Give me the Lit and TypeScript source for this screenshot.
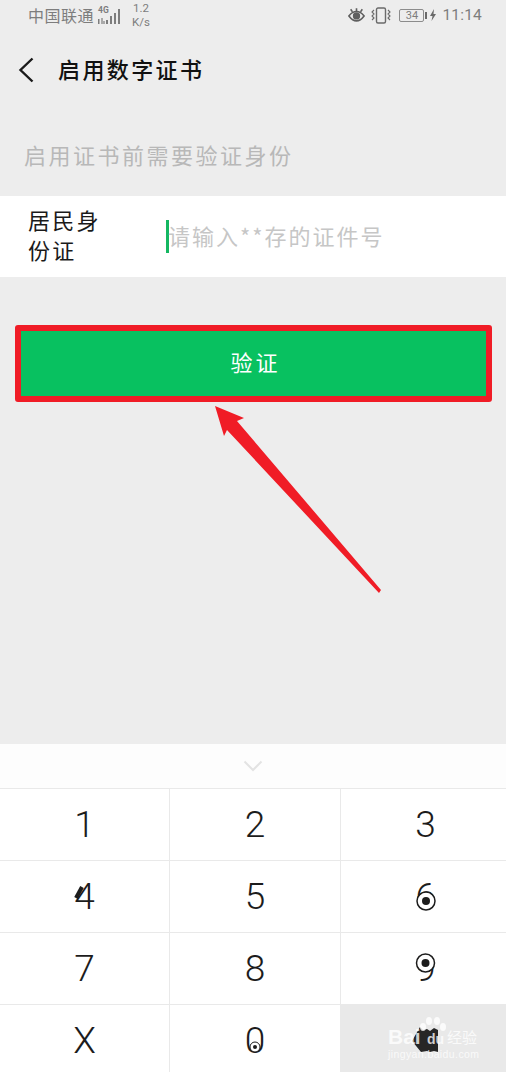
import { html, css, LitElement } from 'lit';
import { customElement } from 'lit/decorators.js';

const KEYS = ['1', '2', '3', '4', '5', '6', '7', '8', '9', 'X', '0'];

@customElement('app-root')
export class AppRoot extends LitElement {
  static styles = css`
    :host {
      display: flex;
      flex-direction: column;
      position: relative;
      width: 506px;
      height: 1072px;
      overflow: hidden;
      background: #ededed;
      font-family: 'Noto Sans CJK SC', 'Noto Sans', sans-serif;
      color: #111;
    }

    .status {
      display: flex;
      align-items: center;
      height: 32px;
      padding: 0 24px 2px 28px;
      box-sizing: border-box;
      color: #7d7d7d;
    }

    .carrier {
      font-size: 16px;
      line-height: 30px;
      letter-spacing: 0.5px;
    }

    .signal {
      margin-left: 2px;
    }

    .speed {
      margin-left: 8px;
      font-family: 'Roboto', sans-serif;
      font-size: 11.5px;
      line-height: 14px;
      text-align: center;
    }

    .status-right {
      display: flex;
      align-items: center;
      margin-left: auto;
    }

    .clock {
      margin-left: 4px;
      font-family: 'Roboto', sans-serif;
      font-size: 15.5px;
      letter-spacing: 0.2px;
    }

    .battery {
      display: flex;
      align-items: center;
      justify-content: center;
      box-sizing: border-box;
      width: 25px;
      height: 13px;
      margin-left: 8px;
      border: 1px solid #8c8c8c;
      border-radius: 2px;
      font-family: 'Roboto', sans-serif;
      font-size: 11px;
      line-height: 1;
    }

    .header {
      display: flex;
      align-items: center;
      height: 76px;
      padding-left: 18px;
    }

    .title {
      margin-left: 24px;
      padding-bottom: 4px;
      font-size: 22px;
      font-weight: 500;
      letter-spacing: 2.4px;
    }

    .hint {
      height: 88px;
      padding: 29px 0 0 24px;
      box-sizing: border-box;
      font-size: 22px;
      line-height: 34px;
      letter-spacing: 2.5px;
      color: #b8b8b8;
    }

    .field {
      display: flex;
      align-items: center;
      height: 81px;
      padding-left: 28px;
      background: #fff;
    }

    .label {
      width: 74px;
      padding-bottom: 5px;
      font-size: 22px;
      line-height: 30px;
      letter-spacing: 2.2px;
      color: #1a1a1a;
    }

    .cursor {
      width: 3px;
      height: 33px;
      margin-left: 64px;
      margin-right: -1px;
      background: #14b761;
    }

    .placeholder {
      padding-bottom: 4px;
      font-size: 22px;
      letter-spacing: 2px;
      color: #c6c6c6;
      white-space: nowrap;
    }

    .submit {
      display: flex;
      align-items: center;
      justify-content: center;
      box-sizing: border-box;
      height: 77px;
      margin: 48px 14px 0 15px;
      padding: 0 0 6px 4px;
      border: 6px solid #f01c26;
      border-radius: 3px;
      background: #08c160;
      color: #fff;
      font-size: 22px;
      letter-spacing: 3px;
    }

    .keyboard {
      margin-top: auto;
      background: #fff;
    }

    .collapse {
      display: flex;
      align-items: center;
      justify-content: center;
      height: 44px;
      padding-right: 1px;
      box-sizing: border-box;
      background: #fdfdfd;
    }

    .keys {
      display: grid;
      grid-template-columns: 169px 171px 166px;
      grid-template-rows: 72px 72px 72px 68px;
    }

    .key {
      display: flex;
      align-items: center;
      justify-content: center;
      box-sizing: border-box;
      border-top: 1px solid #e9e9e9;
      border-left: 1px solid #e9e9e9;
      font-family: 'Roboto', sans-serif;
      font-size: 37px;
      font-weight: 300;
      color: #1c1c1c;
    }

    .key:nth-child(3n + 1) {
      border-left: 0;
    }

    .key:nth-child(3n) {
      padding-left: 4px;
    }

    .key:nth-child(n + 10) {
      padding-top: 3px;
    }

    .key.delete {
      border-left: 0;
      padding-top: 0;
      background: #e9e9e9;
    }

    .overlay {
      position: absolute;
      left: 0;
      top: 0;
      pointer-events: none;
    }

    .watermark {
      position: absolute;
      left: 388px;
      top: 1016px;
      width: 92px;
      height: 44px;
      color: rgba(255, 255, 255, 0.78);
      pointer-events: none;
    }

    .wm-brand {
      position: absolute;
      left: 0;
      top: 9px;
      font-family: 'Liberation Sans', sans-serif;
      font-size: 21px;
      font-weight: 700;
      line-height: 24px;
      white-space: nowrap;
    }

    .wm-du {
      position: absolute;
      left: 39px;
      top: 15px;
      font-family: 'Liberation Sans', sans-serif;
      font-size: 14px;
      font-weight: 700;
      line-height: 16px;
    }

    .wm-cn {
      position: absolute;
      left: 59px;
      top: 10px;
      font-size: 15px;
      line-height: 22px;
      white-space: nowrap;
    }

    .wm-url {
      position: absolute;
      left: 0;
      top: 32px;
      font-family: 'Liberation Sans', sans-serif;
      font-size: 10.5px;
      line-height: 13px;
      letter-spacing: 0.4px;
      white-space: nowrap;
    }

    .wm-paw {
      position: absolute;
      left: 31px;
      top: 0;
    }
  `;

  render() {
    return html`
      <div class="status">
        <span class="carrier">中国联通</span>
        <svg class="signal" width="28" height="22" viewBox="0 0 28 22" fill="#7d7d7d">
          <text x="2" y="9" font-family="Roboto, sans-serif" font-size="8.5" font-weight="700">4G</text>
          <rect x="2" y="15" width="1.5" height="5" />
          <path d="M6 14v6M8 17v3" stroke="#7d7d7d" stroke-width="1.2" />
          <rect x="10" y="16" width="2" height="4" />
          <rect x="14" y="12" width="2" height="8" />
          <rect x="18" y="9" width="2" height="11" />
          <rect x="22" y="5" width="2" height="15" />
        </svg>
        <span class="speed">1.2<br />K/s</span>
        <div class="status-right">
          <svg width="17" height="15" viewBox="0 0 19 16" fill="none" stroke="#5f5f5f" stroke-width="1.8">
            <path d="M1 8.500C4 4.500 6.500 3.500 9.500 3.500s5.500 1 8.500 5C15 12.500 12.500 14 9.500 14S4 12.500 1 8.500z" />
            <circle cx="9.500" cy="8.500" r="3.200" fill="#5f5f5f" />
            <path d="M3 1l2 3M16 1l-2 3M9.500 0v3" />
          </svg>
          <svg style="margin-left:6px" width="20" height="17" viewBox="0 0 20 17" fill="none" stroke="#6a6a6a" stroke-width="1.400">
            <rect x="5.500" y="1" width="9" height="15" rx="1.500" />
            <path d="M3 3l-2 2 2 2-2 2 2 2-2 2M17 3l2 2-2 2 2 2-2 2 2 2" stroke-width="1.100" />
          </svg>
          <span class="battery">34</span>
          <svg width="14" height="14" viewBox="0 0 14 14" fill="#6a6a6a">
            <rect x="1" y="4" width="2" height="7" />
            <path d="M10 1L6 8h2.500L7.500 13 12 6H9.500z" />
          </svg>
          <span class="clock">11:14</span>
        </div>
      </div>

      <div class="header">
        <svg width="16" height="26" viewBox="0 0 16 26" fill="none" stroke="#1a1a1a" stroke-width="2.400">
          <path d="M14.500 1.500L2.500 13l12 11.500" />
        </svg>
        <span class="title">启用数字证书</span>
      </div>

      <div class="hint">启用证书前需要验证身份</div>

      <div class="field">
        <div class="label">居民身份证</div>
        <div class="cursor"></div>
        <span class="placeholder">请输入**存的证件号</span>
      </div>

      <div class="submit">验证</div>

      <div class="keyboard">
        <div class="collapse">
          <svg width="20" height="12" viewBox="0 0 20 12" fill="none" stroke="#e3e3e3" stroke-width="2">
            <path d="M1.500 1.500L10 10l8.500-8.500" />
          </svg>
        </div>
        <div class="keys">
          ${KEYS.map((k) => html`<div class="key">${k}</div>`)}
          <div class="key delete">
            <svg width="28" height="26" viewBox="0 0 28 26" fill="#262626">
              <path d="M9 1l3 3 4-1 3 2 4-3 4 2v22l-4-1-4 1-3-1-6 1L1 15z" />
            </svg>
          </div>
        </div>
      </div>

      <svg class="overlay" width="506" height="1072" viewBox="0 0 506 1072">
        <path d="M215 406L244 418 237 421 381 590 379 593 227 430 224 436z" fill="#f01c26" />
        <!-- stray marks on the digits in the source picture -->
        <path d="M82 887l-6 11" stroke="#1c1c1c" stroke-width="4" />
        <g fill="#fff" stroke="#1c1c1c">
          <circle cx="426" cy="901" r="9" stroke-width="1.500" />
          <circle cx="425.500" cy="963" r="9" stroke-width="1.500" />
          <circle cx="255" cy="1047" r="5" stroke-width="1" />
        </g>
        <g fill="#1c1c1c">
          <circle cx="426" cy="901" r="4" />
          <circle cx="425.500" cy="963" r="4" />
          <circle cx="255" cy="1047" r="2" />
        </g>
      </svg>

      <div class="watermark">
        <svg class="wm-paw" width="28" height="18" viewBox="0 0 28 18" fill="rgba(255,255,255,0.8)">
          <ellipse cx="4" cy="11" rx="3" ry="4" />
          <ellipse cx="10" cy="5" rx="3" ry="4" />
          <ellipse cx="18" cy="5" rx="3" ry="4" />
          <ellipse cx="24" cy="11" rx="3" ry="4" />
        </svg>
        <span class="wm-brand">Bai</span>
        <span class="wm-du">du</span>
        <span class="wm-cn">经验</span>
        <span class="wm-url">jingyan.baidu.com</span>
      </div>
    `;
  }
}
